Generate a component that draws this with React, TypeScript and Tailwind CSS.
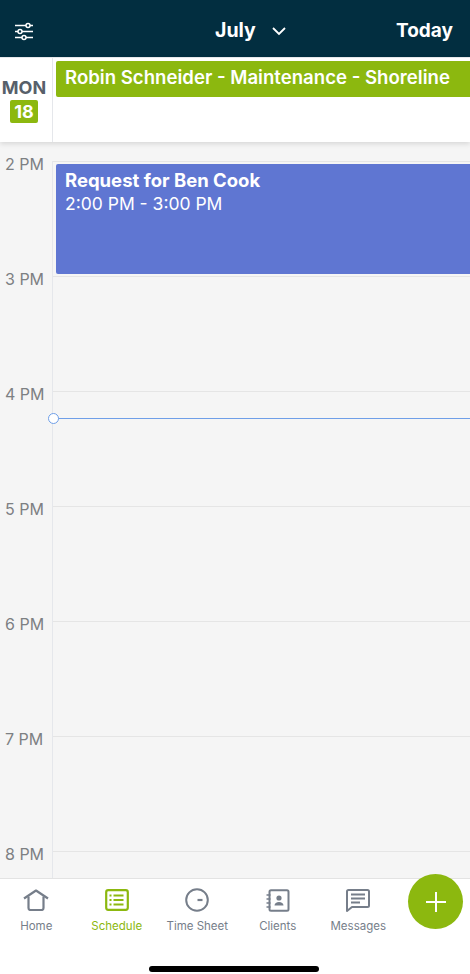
import React from 'react';

const hours = ['2 PM', '3 PM', '4 PM', '5 PM', '6 PM', '7 PM', '8 PM'];

const SlidersIcon = () => (
  <svg width="20" height="19" viewBox="0 0 20 19" fill="none" stroke="white" strokeWidth="1.5">
    <path d="M1 3.5h11M16 3.5h3M1 9.5h3M8 9.5h11M1 15.5h7M12 15.5h7" />
    <circle cx="14" cy="3.5" r="2" />
    <circle cx="6" cy="9.5" r="2" />
    <circle cx="10" cy="15.5" r="2" />
  </svg>
);

const tabs = [
  {
    label: 'Home',
    active: false,
    icon: (
      <svg width="26" height="22" viewBox="0 0 26 22" fill="none" stroke="currentColor" strokeWidth="2.2" strokeLinejoin="round">
        <path d="M1 9.500 13 1.500l12 8" />
        <path d="M5.500 7.500v11.500a2 2 0 0 0 2 2h11a2 2 0 0 0 2-2V7.500" />
      </svg>
    ),
  },
  {
    label: 'Schedule',
    active: true,
    icon: (
      <svg width="24" height="22" viewBox="0 0 24 22" fill="none" stroke="currentColor" strokeWidth="2.2">
        <rect x="1.200" y="1.200" width="21.600" height="19.600" rx="2" />
        <path d="M8.500 6.500h10M8.500 11h10M8.500 15.500h10M4.500 6.500h2M4.500 11h2M4.500 15.500h2" strokeWidth="1.800" />
      </svg>
    ),
  },
  {
    label: 'Time Sheet',
    active: false,
    icon: (
      <svg width="24" height="24" viewBox="0 0 24 24" fill="none" stroke="currentColor" strokeWidth="2">
        <circle cx="12" cy="12" r="10.800" />
        <path d="M12.500 12h5" strokeWidth="2.200" />
      </svg>
    ),
  },
  {
    label: 'Clients',
    active: false,
    icon: (
      <svg width="24" height="23" viewBox="0 0 24 23" fill="none" stroke="currentColor" strokeWidth="2">
        <rect x="3.500" y="1.200" width="19" height="20.600" rx="1.500" />
        <path d="M0.500 6h4M0.500 10h4M0.500 14h4M0.500 18h4" strokeWidth="1.600" />
        <circle cx="13" cy="9" r="2.600" fill="currentColor" stroke="none" />
        <path d="M8.500 16.500c0-2.400 2-3.600 4.500-3.600s4.500 1.200 4.500 3.600z" fill="currentColor" stroke="none" />
      </svg>
    ),
  },
  {
    label: 'Messages',
    active: false,
    icon: (
      <svg width="24" height="23" viewBox="0 0 24 23" fill="none" stroke="currentColor" strokeWidth="2">
        <path d="M2.500 1h19a1.500 1.500 0 0 1 1.500 1.500v14a1.500 1.500 0 0 1-1.500 1.500H6l-5 4V2.500A1.500 1.500 0 0 1 2.500 1z" strokeLinejoin="round" />
        <path d="M5 5.500h14M5 9.500h14M5 13.500h9" strokeWidth="1.800" />
      </svg>
    ),
  },
];

export default function App() {
  return (
    <div className="relative flex h-[974px] w-[470px] flex-col overflow-hidden bg-white font-['Inter',sans-serif]">
      {/* Header */}
      <div className="flex h-[57px] shrink-0 items-center bg-[#022e40] pl-[14px] pr-[17px] pt-[5px] text-white">
        <SlidersIcon />
        <div className="ml-[181px] flex items-center gap-[16px]">
          <span className="text-[19.500px] font-bold">July</span>
          <svg width="14" height="9" viewBox="0 0 14 9" fill="none" stroke="white" strokeWidth="1.800">
            <path d="M1 1l6 6 6-6" />
          </svg>
        </div>
        <span className="ml-auto text-[19px] font-bold">Today</span>
      </div>

      {/* All day row */}
      <div className="z-10 flex h-[85px] shrink-0 border-t border-[#e5e7eb] bg-white shadow-[0_2px_5px_rgba(0,0,0,0.12)]">
        <div className="flex w-[53px] shrink-0 flex-col items-center border-r border-[#e5e7eb] pr-[4px] pt-[19px]">
          <span className="text-[18px] font-bold leading-[22px] text-[#57606a]">MON</span>
          <span className="mt-[1px] flex h-[23px] w-[28px] items-center justify-center rounded-[2px] bg-[#8cb80f] text-[18px] font-bold leading-none text-white">
            18
          </span>
        </div>
        <div className="flex-1 pl-[3px] pt-[3px]">
          <div className="flex h-[36px] items-center rounded-l-[2px] bg-[#8cb80f] pb-[3px] pl-[9px] text-[18.600px] font-semibold whitespace-nowrap text-white">
            Robin Schneider - Maintenance - Shoreline
          </div>
        </div>
      </div>

      {/* Hour grid */}
      <div className="relative flex-1 overflow-hidden bg-[#f5f5f5] pt-[19px]">
        {hours.map((hour) => (
          <div key={hour} className="flex h-[115px]">
            <div className="w-[53px] shrink-0 border-r border-[#e5e7eb]">
              <span className="-mt-[6px] block pl-[5px] text-[16px] leading-[18px] text-[#7d8083]">{hour}</span>
            </div>
            <div className="flex-1 border-t border-[#e5e5e5]" />
          </div>
        ))}
        <div className="absolute left-[56px] right-0 top-[22px] h-[110px] rounded-l-[2px] bg-[#5f76d2] pl-[9px] pt-[5px] text-white">
          <div className="text-[18.500px] font-bold leading-[23px]">Request for Ben Cook</div>
          <div className="text-[17.500px] leading-[23px]">2:00 PM - 3:00 PM</div>
        </div>
        <div className="absolute left-[53px] right-0 top-[276px] h-px bg-[#6f9fe8]" />
        <div className="absolute left-[48px] top-[271px] h-[11px] w-[11px] rounded-full border border-[#6f9fe8] bg-white" />
      </div>

      {/* Tab bar */}
      <div className="relative h-[96px] shrink-0 border-t border-[#e3e3e3] bg-white">
        <div className="-ml-[4px] flex">
          {tabs.map((tab) => (
            <div
              key={tab.label}
              className={`flex h-[56px] w-[80.500px] shrink-0 flex-col items-center pt-[9px] ${tab.active ? 'text-[#8cb80f]' : 'text-[#767e8a]'}`}
            >
              <div className="flex h-[24px] items-center justify-center">{tab.icon}</div>
              <span className="mt-[6px] text-[11.500px] leading-[16px]">{tab.label}</span>
            </div>
          ))}
        </div>
        <div className="absolute left-[408px] top-[-5px] flex h-[55px] w-[55px] items-center justify-center rounded-full bg-[#8cb80f]">
          <svg width="20" height="20" viewBox="0 0 20 20" stroke="white" strokeWidth="2">
            <path d="M10 0v20M0 10h20" />
          </svg>
        </div>
        <div className="absolute bottom-[2px] left-[149px] h-[6px] w-[170px] rounded-full bg-black" />
      </div>
    </div>
  );
}
